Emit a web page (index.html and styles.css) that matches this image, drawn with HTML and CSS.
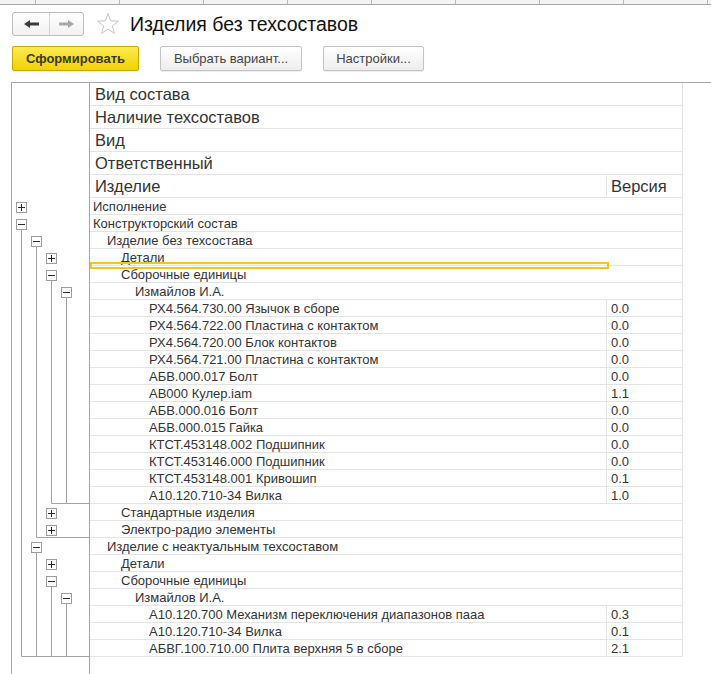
FILE: index.html
```html
<!DOCTYPE html>
<html lang="ru">
<head>
<meta charset="utf-8">
<title>Изделия без техсоставов</title>
<link rel="stylesheet" href="styles.css">
</head>
<body>
<div class="strip"><span class="first"></span><span></span><span></span><span></span><span></span><span></span><span></span><span></span><span></span></div>

<div class="titlebar">
  <div class="nav">
    <button class="nav-btn back" aria-label="Назад">
      <svg width="15" height="8" viewBox="0 0 15 8"><path d="M0 4 L6 0 L6 2.6 L15 2.6 L15 5.4 L6 5.4 L6 8 Z" fill="#3c3c3c"/></svg>
    </button>
    <button class="nav-btn fwd" aria-label="Вперёд">
      <svg width="15" height="8" viewBox="0 0 15 8"><path d="M15 4 L9 0 L9 2.6 L0 2.6 L0 5.4 L9 5.4 L9 8 Z" fill="#a8a8a8"/></svg>
    </button>
  </div>
  <svg class="star" width="24" height="24" viewBox="0 0 24 24"><polygon points="12,1.5 14.7,8.78 22.46,9.1 16.37,13.92 18.47,21.4 12,17.1 5.53,21.4 7.63,13.92 1.54,9.1 9.3,8.78" fill="none" stroke="#c4c4c4" stroke-width="1"/></svg>
  <h1 class="title">Изделия без техсоставов</h1>
</div>

<div class="toolbar">
  <button class="btn primary">Сформировать</button>
  <button class="btn btn-variant">Выбрать вариант...</button>
  <button class="btn btn-settings">Настройки...</button>
</div>

<div class="report">
  <div class="tree">
    <div class="tree-head"></div>
    <svg class="outline" width="77" height="459" viewBox="0 0 77 459">
      <g stroke="#a3a3a3" stroke-width="1" fill="none">
        <path d="M9.5 32 V458.5 H77"/>
        <path d="M24.5 49 V339.5 H77"/>
        <path d="M39.5 83 V305.5 H77"/>
        <path d="M54.5 100 V305.5"/>
        <path d="M24.5 355 V458.5"/>
        <path d="M39.5 389 V458.5"/>
        <path d="M54.5 406 V458.5"/>
      </g>
      <g stroke="#9c9c9c" fill="#fff">
        <rect x="4.5" y="4.5" width="10" height="10"/>
        <rect x="4.5" y="21.5" width="10" height="10"/>
        <rect x="19.5" y="38.5" width="10" height="10"/>
        <rect x="34.5" y="55.5" width="10" height="10"/>
        <rect x="34.5" y="72.5" width="10" height="10"/>
        <rect x="49.5" y="89.5" width="10" height="10"/>
        <rect x="34.5" y="310.5" width="10" height="10"/>
        <rect x="34.5" y="327.5" width="10" height="10"/>
        <rect x="19.5" y="344.5" width="10" height="10"/>
        <rect x="34.5" y="361.5" width="10" height="10"/>
        <rect x="34.5" y="378.5" width="10" height="10"/>
        <rect x="49.5" y="395.5" width="10" height="10"/>
      </g>
      <g stroke="#2a2a2a" stroke-width="1" fill="none">
        <path d="M6 9.5 H13 M9.5 6 V13"/>
        <path d="M6 26.5 H13"/>
        <path d="M21 43.5 H28"/>
        <path d="M36 60.5 H43 M39.5 57 V64"/>
        <path d="M36 77.5 H43"/>
        <path d="M51 94.5 H58"/>
        <path d="M36 315.5 H43 M39.5 312 V319"/>
        <path d="M36 332.5 H43 M39.5 329 V336"/>
        <path d="M21 349.5 H28"/>
        <path d="M36 366.5 H43 M39.5 363 V370"/>
        <path d="M36 383.5 H43"/>
        <path d="M51 400.5 H58"/>
      </g>
    </svg>
  </div>

  <div class="grid">
    <div class="hrow"><div class="hcell">Вид состава</div></div>
    <div class="hrow"><div class="hcell">Наличие техсоставов</div></div>
    <div class="hrow"><div class="hcell">Вид</div></div>
    <div class="hrow"><div class="hcell">Ответственный</div></div>
    <div class="hrow"><div class="hcell name">Изделие</div><div class="hcell ver">Версия</div></div>

    <div class="row"><div class="cell l0">Исполнение</div></div>
    <div class="row"><div class="cell l0">Конструкторский состав</div></div>
    <div class="row"><div class="cell l1">Изделие без техсостава</div></div>
    <div class="row"><div class="cell l2">Детали</div></div>
    <div class="row"><div class="cell l2">Сборочные единицы</div></div>
    <div class="row"><div class="cell l3">Измайлов И.А.</div></div>
    <div class="row"><div class="cell name l4">РХ4.564.730.00 Язычок в сборе</div><div class="cell ver">0.0</div></div>
    <div class="row"><div class="cell name l4">РХ4.564.722.00 Пластина с контактом</div><div class="cell ver">0.0</div></div>
    <div class="row"><div class="cell name l4">РХ4.564.720.00 Блок контактов</div><div class="cell ver">0.0</div></div>
    <div class="row"><div class="cell name l4">РХ4.564.721.00 Пластина с контактом</div><div class="cell ver">0.0</div></div>
    <div class="row"><div class="cell name l4">АБВ.000.017 Болт</div><div class="cell ver">0.0</div></div>
    <div class="row"><div class="cell name l4">АВ000 Кулер.iam</div><div class="cell ver">1.1</div></div>
    <div class="row"><div class="cell name l4">АБВ.000.016 Болт</div><div class="cell ver">0.0</div></div>
    <div class="row"><div class="cell name l4">АБВ.000.015 Гайка</div><div class="cell ver">0.0</div></div>
    <div class="row"><div class="cell name l4">КТСТ.453148.002 Подшипник</div><div class="cell ver">0.0</div></div>
    <div class="row"><div class="cell name l4">КТСТ.453146.000 Подшипник</div><div class="cell ver">0.0</div></div>
    <div class="row"><div class="cell name l4">КТСТ.453148.001 Кривошип</div><div class="cell ver">0.1</div></div>
    <div class="row"><div class="cell name l4">А10.120.710-34 Вилка</div><div class="cell ver">1.0</div></div>
    <div class="row"><div class="cell l2">Стандартные изделия</div></div>
    <div class="row"><div class="cell l2">Электро-радио элементы</div></div>
    <div class="row"><div class="cell l1">Изделие с неактуальным техсоставом</div></div>
    <div class="row"><div class="cell l2">Детали</div></div>
    <div class="row"><div class="cell l2">Сборочные единицы</div></div>
    <div class="row"><div class="cell l3">Измайлов И.А.</div></div>
    <div class="row"><div class="cell name l4">А10.120.700 Механизм переключения диапазонов пааа</div><div class="cell ver">0.3</div></div>
    <div class="row"><div class="cell name l4">А10.120.710-34 Вилка</div><div class="cell ver">0.1</div></div>
    <div class="row"><div class="cell name l4">АБВГ.100.710.00 Плита верхняя 5 в сборе</div><div class="cell ver">2.1</div></div>

    <div class="selection"></div>
  </div>
</div>
</body>
</html>
```

FILE: styles.css
```css
* { box-sizing: border-box; }

html, body {
  margin: 0;
  padding: 0;
  background: #fff;
  overflow: hidden;
}

body {
  font-family: "Liberation Sans", Arial, sans-serif;
  color: #333;
  width: 711px;
  height: 674px;
}

/* cut-off column strip at the very top */
.strip {
  display: flex;
  height: 5px;
  background: #f3f3f3;
  border-bottom: 1px solid #a6a6a6;
}
.strip span {
  flex: 0 0 84px;
  border-right: 1px solid #b8b8b8;
}
.strip span.first { flex-basis: 36px; }

/* title bar */
.titlebar {
  display: flex;
  align-items: center;
  height: 24px;
  margin-top: 7px;
  padding-left: 12px;
}

.nav {
  display: flex;
  width: 72px;
  height: 24px;
  border: 1px solid #bdbdbd;
  border-radius: 3px;
  background: linear-gradient(#ffffff, #f1f1f1);
  overflow: hidden;
}
.nav-btn {
  display: flex;
  align-items: center;
  justify-content: center;
  border: 0;
  padding: 0;
  margin: 0;
  background: transparent;
}
.nav-btn.back {
  width: 37px;
  border-right: 1px solid #d4d4d4;
}
.nav-btn.fwd {
  flex: 1;
}

.star {
  margin-left: 12px;
  display: block;
}

.title {
  margin: 0 0 0 10px;
  font-size: 19.5px;
  font-weight: normal;
  line-height: 24px;
  color: #111;
}

/* toolbar */
.toolbar {
  display: flex;
  gap: 21px;
  margin-top: 10px;
  padding-left: 12px;
  height: 25px;
}
.btn {
  height: 25px;
  padding: 0;
  font-family: "Liberation Sans", Arial, sans-serif;
  font-size: 13px;
  color: #444;
  border: 1px solid #c3c3c3;
  border-radius: 2px;
  background: linear-gradient(#ffffff, #ededed);
  box-shadow: 0 1px 1px rgba(0, 0, 0, 0.08);
}
.btn.primary {
  width: 127px;
  font-weight: bold;
  color: #3a3a1a;
  border-color: #c9a900;
  background: linear-gradient(#fcea52, #f1d200);
}
.btn-variant { width: 142px; }
.btn-settings { width: 101px; }

/* report */
.report {
  display: flex;
  align-items: flex-start;
  margin-top: 11px;
  margin-left: 11px;
  height: 592px;
  border-left: 1px solid #a6a6a6;
  border-top: 1px solid #a6a6a6;
}

.tree {
  flex: 0 0 78px;
  height: 100%;
  border-right: 1px solid #a6a6a6;
}
.tree-head { height: 115px; }
.outline { display: block; }

.grid {
  position: relative;
  flex: 0 0 593px;
  border-right: 1px solid #e2e2e2;
}

.hrow {
  display: flex;
  height: 23px;
  border-bottom: 1px solid #e4e4e4;
}
.hcell {
  flex: 1;
  padding-left: 5px;
  font-size: 16.5px;
  line-height: 22px;
  color: #333;
  white-space: nowrap;
}

.row {
  display: flex;
  height: 17px;
  border-bottom: 1px solid #e4e4e4;
}
.cell {
  flex: 1;
  padding-top: 1px;
  font-size: 13px;
  line-height: 16px;
  color: #333;
  white-space: nowrap;
}

.name {
  flex: 0 0 517px;
  border-right: 1px solid #e4e4e4;
}
.ver {
  flex: 1;
  padding-left: 4px;
}
.hcell.ver { padding-left: 4px; }

.l0 { padding-left: 3px; }
.l1 { padding-left: 17px; }
.l2 { padding-left: 31px; }
.l3 { padding-left: 45px; }
.l4 { padding-left: 59px; }

/* selection frame over the rows */
.selection {
  position: absolute;
  left: 0;
  top: 179px;
  width: 519px;
  height: 7px;
  border: 2px solid #f5c51c;
}
```
